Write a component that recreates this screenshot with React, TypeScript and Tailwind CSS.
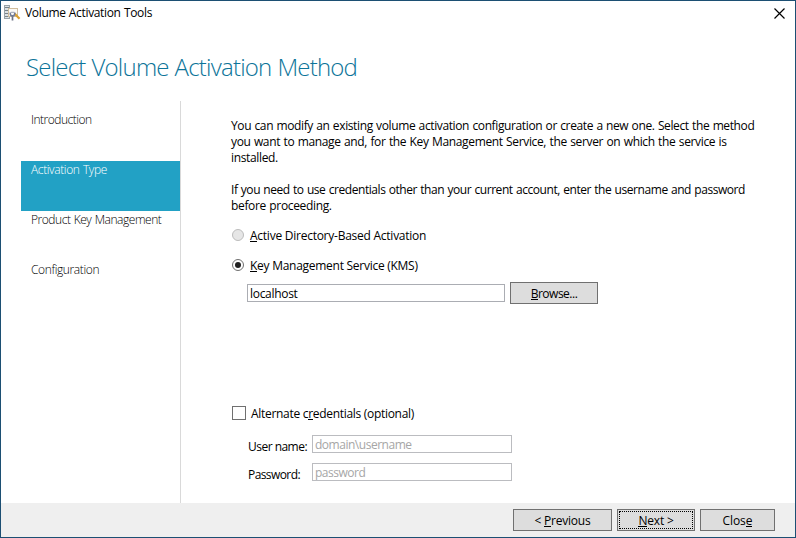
import React from 'react';

function AppIcon() {
  return (
    <svg width="17" height="17" viewBox="0 0 17 17" className="shrink-0" shapeRendering="crispEdges">
      <rect x="0" y="0" width="6" height="14" fill="#9aa3a8" />
      <rect x="1" y="1" width="4" height="12" fill="#dde2e4" />
      <path d="M1 2.500h4M1 5.500h3M1 8.500h3M1 11.500h3" stroke="#78838a" />
      <rect x="4" y="3" width="10" height="9" fill="#d0bd9c" />
      <rect x="5" y="4" width="8" height="7" fill="#fbf9f5" />
      <g shapeRendering="auto" fill="none">
        <path d="M10.500 8.500l5 5.300" stroke="#dba02f" strokeWidth="2.200" />
        <path d="M8.500 10v5.500" stroke="#6b7183" strokeWidth="1.700" />
        <path d="M6.300 7.500v1.300a2.200 2.200 0 0 0 4.400 0V7.500" stroke="#717c98" strokeWidth="1.500" />
        <path d="M7 7.300h3.500" stroke="#99a1b2" />
      </g>
    </svg>
  );
}

const steps = [
  { label: 'Introduction', tracking: 'tracking-[-0.5px]' },
  { label: 'Activation Type', tracking: 'tracking-[-0.38px]', active: true },
  { label: 'Product Key Management', tracking: 'tracking-[-0.46px]' },
  { label: 'Configuration', tracking: 'tracking-[-0.38px]' },
];

function Key({ children }: { children: string }) {
  return <span className="inline-block h-[13px] border-b border-current leading-[13px]">{children}</span>;
}

function Button({ className, children }: { className: string; children: React.ReactNode }) {
  return (
    <button className={`flex h-[22px] items-center justify-center border border-[#707070] bg-[#dddddd] ${className}`}>
      {children}
    </button>
  );
}

export default function App() {
  return (
    <div className="flex h-[538px] w-[796px] flex-col overflow-hidden border border-[#1c4f73] bg-white font-['Open_Sans','Noto_Sans',sans-serif] text-[12px] leading-4 whitespace-pre text-black">
      <header className="flex h-6 shrink-0 items-center pl-[3px]">
        <AppIcon />
        <span className="ml-1 tracking-[-0.34px] [word-spacing:0.5px]">Volume Activation Tools</span>
        <svg width="11" height="11" viewBox="0 0 11 11" className="mr-[10px] ml-auto">
          <path d="M.5.5l10 10M10.500.5l-10 10" stroke="#000" strokeWidth="1.200" />
        </svg>
      </header>
      <h1 className="h-[76px] shrink-0 pt-[26px] pl-[25px] text-[24px] leading-8 font-light tracking-[-0.79px] [word-spacing:0.5px] text-[#0c7499]">
        Select Volume Activation Method
      </h1>
      <div className="flex h-[402px] shrink-0">
        <nav className="flex w-[180px] shrink-0 flex-col border-r border-[#d9d9d9] pt-[10px] pl-5 font-[350] [word-spacing:0.6px]">
          {steps.map((s) => (
            <div key={s.label} className={`h-[50px] shrink-0 pt-px pl-[10px] ${s.tracking} ${s.active ? 'bg-[#22a1c5] text-white' : 'text-black'}`}>
              {s.label}
            </div>
          ))}
        </nav>
        <main className="flex flex-col pt-[17px] pl-[50px]">
          <div className="h-[110px] [word-spacing:0.6px]">
            <p className="tracking-[-0.38px]">You can modify an existing volume activation configuration or create a new one. Select the method</p>
            <p className="tracking-[-0.35px]">you want to manage and, for the Key Management Service, the server on which the service is</p>
            <p className="tracking-[-0.35px]">installed.</p>
            <p className="mt-4 tracking-[-0.44px]">If you need to use credentials other than your current account, enter the username and password</p>
            <p className="tracking-[-0.34px]">before proceeding.</p>
          </div>
          <label className="flex h-4 items-start pl-px">
            <span className="mt-px mr-[6px] size-3 rounded-full border border-[#bcbcbc] bg-[#e6e6e6]" />
            <span className="tracking-[-0.25px]"><Key>A</Key>ctive Directory-Based Activation</span>
          </label>
          <label className="mt-[14px] flex h-4 items-start pl-px">
            <span className="mt-px mr-[6px] flex size-3 items-center justify-center rounded-full border border-[#707070] bg-white">
              <span className="size-[6px] rounded-full bg-[#212121]" />
            </span>
            <span className="tracking-[-0.27px]"><Key>K</Key>ey Management Service (KMS)</span>
          </label>
          <div className="mt-2 flex h-[22px] items-center pl-4">
            <div className="mr-[5px] flex h-[18px] w-[258px] items-center border border-[#abadb3] pt-px pl-[2px] tracking-[-0.3px]">localhost</div>
            <Button className="w-[88px] pt-[2px] tracking-[-0.5px]"><span><Key>B</Key>rowse...</span></Button>
          </div>
          <label className="mt-[102px] flex h-4 items-start pl-px">
            <span className="mr-[5px] size-[14px] border border-[#707070] bg-white" />
            <span className="tracking-[-0.3px]">Alternate c<Key>r</Key>edentials (optional)</span>
          </label>
          <div className="mt-[13px] flex h-[18px] pl-[17px]">
            <span className="w-16 pt-1 tracking-[-0.52px]">User name:</span>
            <div className="flex w-[200px] items-center border border-[#bbbcc0] pt-px pl-[2px] tracking-[-0.48px] text-[#a6a6a6]">domain\username</div>
          </div>
          <div className="mt-[10px] flex h-[18px] pl-[17px]">
            <span className="w-16 pt-1 tracking-[-0.58px]">Password:</span>
            <div className="flex w-[200px] items-center border border-[#bbbcc0] pt-px pl-[2px] tracking-[-0.48px] text-[#a6a6a6]">password</div>
          </div>
        </main>
      </div>
      <footer className="flex flex-1 items-start justify-end gap-[5px] bg-[#efefef] pt-[6px] pr-5">
        <Button className="w-[99px] pt-px tracking-[-0.24px]"><span>{'< '}<Key>P</Key>revious</span></Button>
        <Button className="w-[78px] p-px tracking-[-0.2px]">
          <span className="flex size-full items-center justify-center border border-dotted border-black pt-px"><span><Key>N</Key>{'ext >'}</span></span>
        </Button>
        <Button className="w-[75px] pt-px tracking-[-0.1px]"><span>Clos<Key>e</Key></span></Button>
      </footer>
    </div>
  );
}
